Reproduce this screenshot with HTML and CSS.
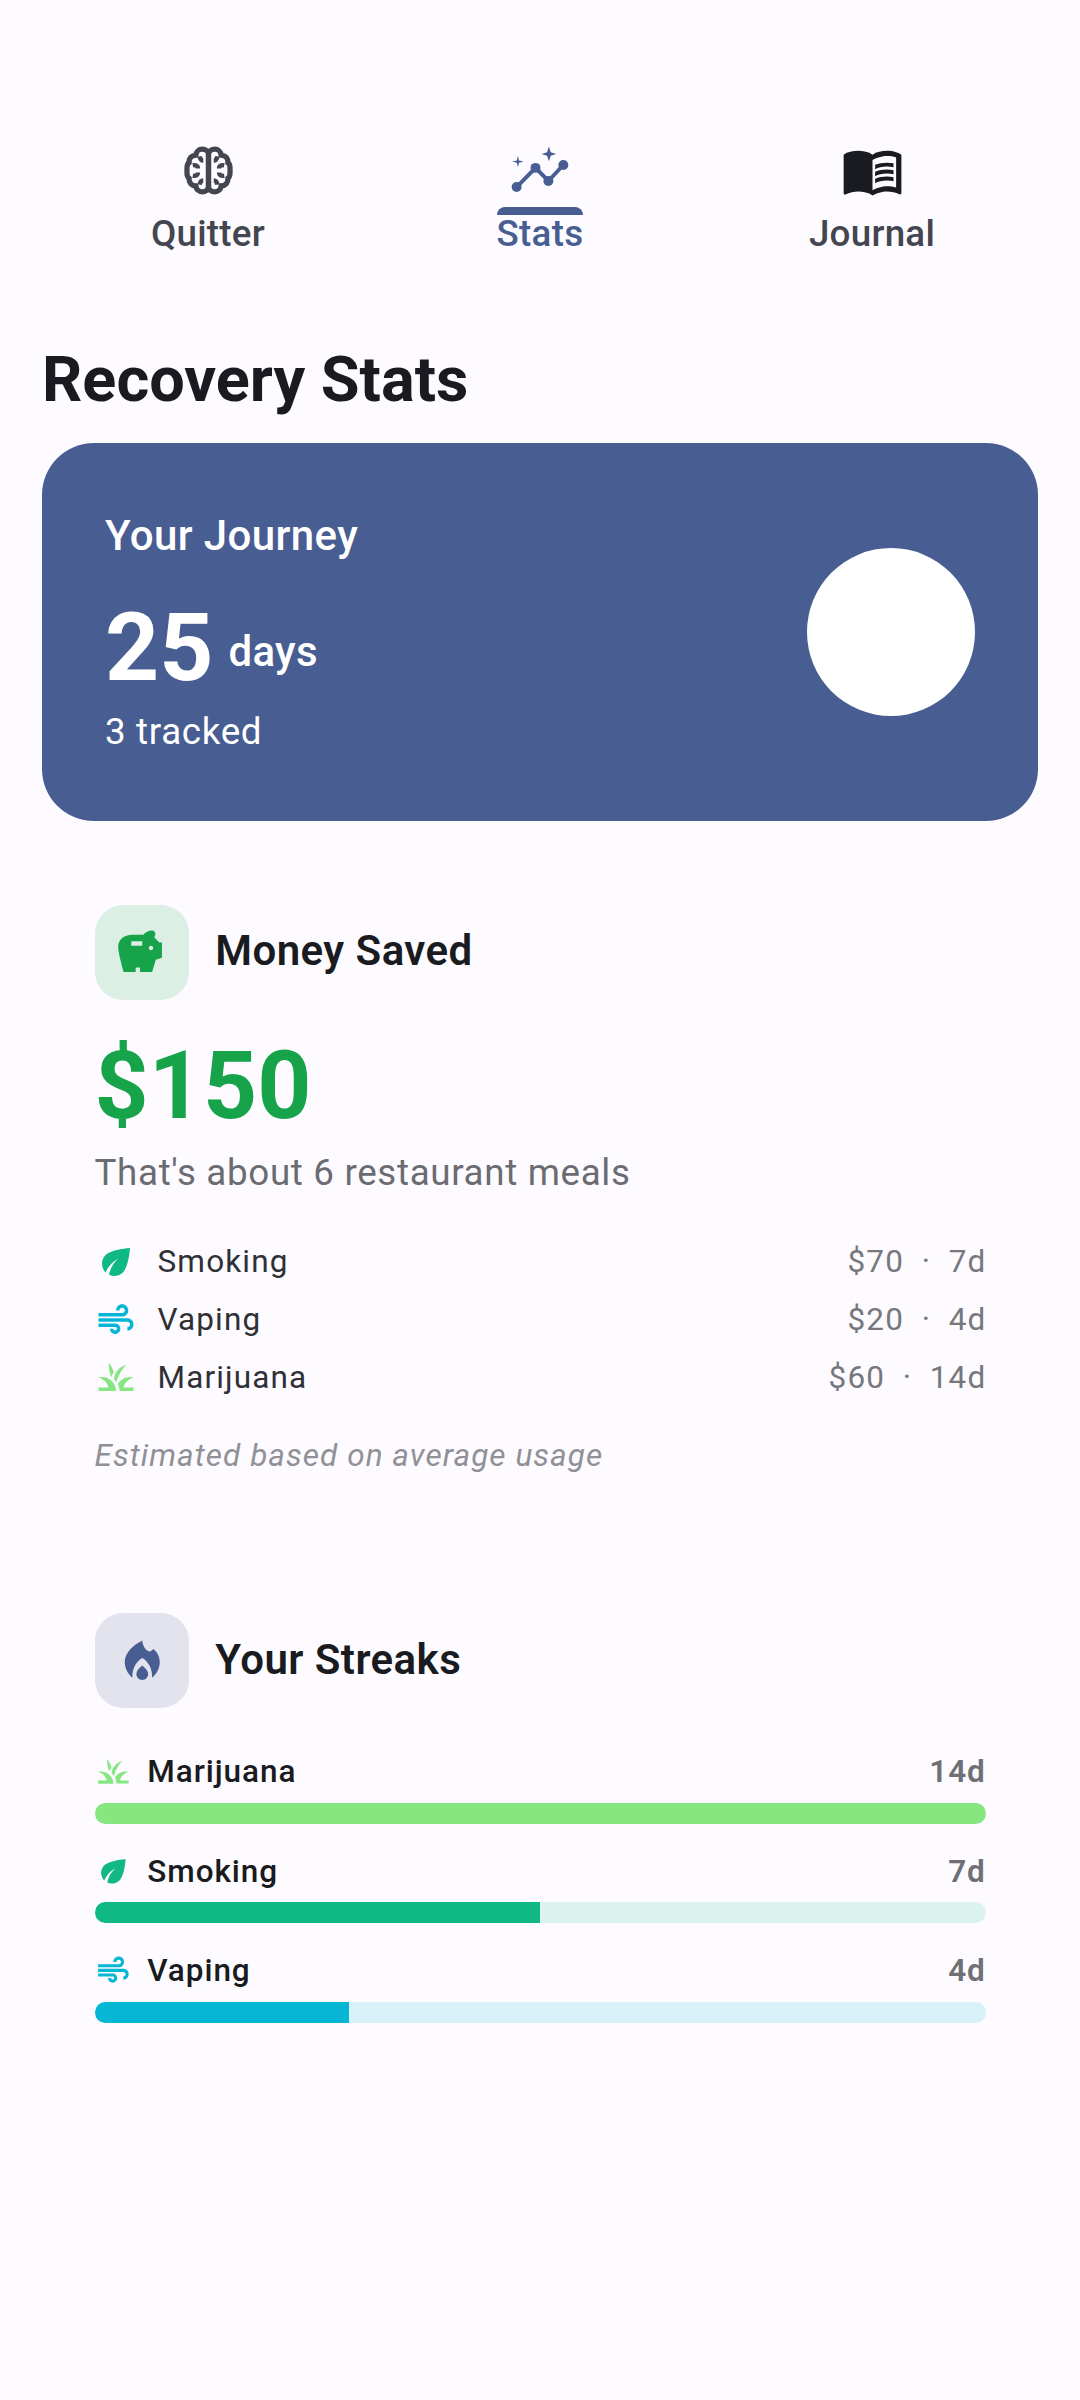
FILE: index.html
```html
<!DOCTYPE html>
<html lang="en">
<head>
    <meta charset="UTF-8">
    <meta name="viewport" content="width=device-width, initial-scale=1.0">
    <title>Recovery Stats</title>
    <link rel="stylesheet" href="styles.css">
</head>
<body>

    <div class="tabs">
        <div class="tab">
            <svg class="tab-icon" viewBox="0 0 24 24" fill="none" stroke="#44464f" stroke-width="2">
                <path d="M12 6C12 4.6 10.8 3.9 9.6 3.9 8.3 3.9 7.3 4.8 7.2 6.1 5.5 6.2 4.5 7.4 4.6 9 3.6 9.6 3.8 10.6 3.8 12S3.6 14.4 4.6 15C4.5 16.6 5.5 17.8 7.2 17.9 7.3 19.2 8.3 20.1 9.6 20.1 10.8 20.1 12 19.4 12 18V6"/>
                <path d="M12 6C12 4.6 13.2 3.9 14.4 3.9 15.7 3.9 16.7 4.8 16.8 6.1 18.5 6.2 19.5 7.4 19.4 9 20.4 9.6 20.2 10.6 20.2 12S20.4 14.4 19.4 15C19.5 16.6 18.5 17.8 16.8 17.9 16.7 19.2 15.7 20.1 14.4 20.1 13.2 20.1 12 19.4 12 18V6"/>
                <path d="M6 10C7.4 9.8 8 10.4 8 11.2M6 14C7.4 14.2 8 13.6 8 12.8M18 10C16.6 9.8 16 10.4 16 11.2M18 14C16.6 14.2 16 13.6 16 12.8M8.6 6.6C8.8 7.8 9.4 8.2 10 8.2M8.6 17.4C8.8 16.2 9.4 15.8 10 15.8M15.4 6.6C15.2 7.8 14.6 8.2 14 8.2M15.4 17.4C15.2 16.2 14.6 15.8 14 15.8" stroke-width="1.7"/>
            </svg>
            <span class="tab-label">Quitter</span>
        </div>
        <div class="tab active">
            <svg class="tab-icon" viewBox="0 0 24 24" fill="#485d92">
                <path d="M2.9 18.3 10.1 11 15 16 20.7 9.9" fill="none" stroke="#485d92" stroke-width="1.5"/>
                <circle cx="2.9" cy="18.3" r="1.9"/>
                <circle cx="10.1" cy="11" r="1.9"/>
                <circle cx="15" cy="16" r="1.9"/>
                <circle cx="20.7" cy="9.9" r="1.9"/>
                <path d="M15.2 2.9 15.9 5 18 5.7 15.9 6.4 15.2 8.5 14.5 6.4 12.4 5.7 14.5 5z"/>
                <path d="M3.4 6.4 3.8 8.2 5.6 8.6 3.8 9 3.4 10.8 3 9 1.2 8.6 3 8.2z"/>
            </svg>
            <span class="tab-indicator"></span>
            <span class="tab-label">Stats</span>
        </div>
        <div class="tab">
            <svg class="tab-icon" viewBox="0 0 24 24" fill="#1a1b20">
                <path d="M21 5c-1.11-.35-2.33-.5-3.5-.5-1.95 0-4.05.4-5.5 1.5-1.45-1.1-3.55-1.5-5.5-1.5S2.45 4.9 1 6v14.65c0 .25.25.5.5.5.1 0 .15-.05.25-.05C3.1 20.45 5.05 20 6.5 20c1.95 0 4.05.4 5.5 1.5 1.35-.85 3.8-1.5 5.5-1.5 1.65 0 3.35.3 4.75 1.05.1.05.15.05.25.05.25 0 .5-.25.5-.5V6c-.6-.45-1.25-.75-2-1zm0 13.5c-1.1-.35-2.3-.5-3.5-.5-1.7 0-4.15.65-5.5 1.5V8c1.35-.85 3.8-1.5 5.5-1.5 1.2 0 2.4.15 3.5.5v11.5z"/>
                <path d="M17.5 10.5c.88 0 1.73.09 2.5.26V9.24c-.79-.15-1.64-.24-2.5-.24-1.7 0-3.24.29-4.5.83v1.66c1.13-.64 2.7-.99 4.5-.99zM13 12.49v1.66c1.13-.64 2.7-.99 4.5-.99.88 0 1.73.09 2.5.26V11.9c-.79-.15-1.64-.24-2.5-.24-1.7 0-3.24.3-4.5.83zM17.5 14.33c-1.7 0-3.24.29-4.5.83v1.66c1.13-.64 2.7-.99 4.5-.99.88 0 1.73.09 2.5.26v-1.52c-.79-.16-1.64-.24-2.5-.24z"/>
            </svg>
            <span class="tab-label">Journal</span>
        </div>
    </div>

    <h1 class="page-title">Recovery Stats</h1>

    <div class="journey-card">
        <div>
            <div class="journey-title">Your Journey</div>
            <div class="journey-count"><span class="journey-number">25</span><span class="journey-unit">days</span></div>
            <div class="journey-tracked">3 tracked</div>
        </div>
        <div class="journey-circle"></div>
    </div>

    <div class="section money-section">
        <div class="section-head">
            <div class="section-icon money-icon">
                <svg viewBox="0 0 24 24" fill="#16a34a"><path d="M19.83 7.5l-2.27-2.27c.07-.42.18-.81.32-1.15.08-.18.12-.37.12-.58 0-.83-.67-1.5-1.5-1.5-1.64 0-3.09.79-4 2h-5C3.46 4 1 6.46 1 9.5S3.5 21 3.5 21H9v-2h2v2h5.5l1.68-5.59 2.82-.94V7.5h-1.17zM12 9H7V7h5v2zm4 2c-.55 0-1-.45-1-1s.45-1 1-1 1 .45 1 1-.45 1-1 1z"/></svg>
            </div>
            <h2 class="section-title">Money Saved</h2>
        </div>
        <div class="money-amount">$150</div>
        <div class="money-note">That's about 6 restaurant meals</div>

        <div class="money-rows">
            <div class="money-row">
                <svg class="row-icon" viewBox="0 0 24 24" fill="#10b981"><path d="M6.05 8.05c-2.73 2.73-2.73 7.15-.02 9.88 1.47-3.4 4.09-6.24 7.36-7.93-2.77 2.34-4.71 5.61-5.39 9.32 2.6 1.23 5.8.78 7.95-1.37C19.43 14.47 20 4 20 4S9.53 4.57 6.05 8.05z"/></svg>
                <span class="row-name">Smoking</span>
                <span class="row-value">$70<i class="row-dot">·</i>7d</span>
            </div>
            <div class="money-row">
                <svg class="row-icon" viewBox="0 0 24 24" fill="#06b6d4"><path d="M14.5 17c0 1.65-1.35 3-3 3s-3-1.35-3-3h2c0 .55.45 1 1 1s1-.45 1-1-.45-1-1-1H2v-2h9.5c1.65 0 3 1.35 3 3zM19 6.5C19 4.57 17.43 3 15.5 3S12 4.57 12 6.5h2c0-.83.67-1.5 1.5-1.5s1.5.67 1.5 1.5S16.33 8 15.5 8H2v2h13.5c1.93 0 3.5-1.57 3.5-3.5zm-.5 4.5H2v2h16.5c.83 0 1.5.67 1.5 1.5s-.67 1.5-1.5 1.5v2c1.93 0 3.5-1.57 3.5-3.5S20.43 11 18.5 11z"/></svg>
                <span class="row-name">Vaping</span>
                <span class="row-value">$20<i class="row-dot">·</i>4d</span>
            </div>
            <div class="money-row">
                <svg class="row-icon" viewBox="0 0 24 24" fill="#86e781"><path d="M12 20H2v-2h5.75C7.02 15.19 4.81 12.99 2 12.26 2.64 12.1 3.31 12 4 12c4.42 0 8 3.58 8 8zM22 12.26c-.64-.16-1.31-.26-2-.26-2.94 0-5.51 1.59-6.9 3.95.43.96.74 2 .83 3.08.03.32.07.64.07.97h8v-2h-5.75c.73-2.81 2.94-5.01 5.75-5.74zM8 4c1.3 1.6 2.3 3.5 2.7 5.6-.6.8-1.1 1.6-1.5 2.5C8.3 9.5 7.7 6.5 8 4zM18 5c-3.8 1-6.6 4-7.2 8 .5.6 1 1.3 1.4 2C13.7 10.4 15.7 7 18 5z"/></svg>
                <span class="row-name">Marijuana</span>
                <span class="row-value">$60<i class="row-dot">·</i>14d</span>
            </div>
        </div>
        <div class="money-foot">Estimated based on average usage</div>
    </div>

    <div class="section streak-section">
        <div class="section-head">
            <div class="section-icon streak-icon">
                <svg viewBox="0 0 24 24" fill="#485d92"><path d="M12 3C12.2 5 13 7 15 8 15.9 7.9 16.6 7.4 17 6.8 18.9 8.2 20 10.4 20 12.8 20 15.6 18.6 18.2 16.5 20 16.7 16 15 12.8 12 11 9 12.8 7.3 16 7.5 20 5.4 18.2 4 15.6 4 12.8 4 8.6 7.8 5.2 12 3z"/><path d="M12 14.4C13.4 15.5 14.7 16.8 14.7 18.3 14.7 19.8 13.5 21 12 21S9.3 19.8 9.3 18.3C9.3 16.8 10.6 15.5 12 14.4z"/></svg>
            </div>
            <h2 class="section-title">Your Streaks</h2>
        </div>

        <div class="streak">
            <div class="streak-head">
                <svg class="streak-glyph" viewBox="0 0 24 24" fill="#86e781"><path d="M12 20H2v-2h5.75C7.02 15.19 4.81 12.99 2 12.26 2.64 12.1 3.31 12 4 12c4.42 0 8 3.58 8 8zM22 12.26c-.64-.16-1.31-.26-2-.26-2.94 0-5.51 1.59-6.9 3.95.43.96.74 2 .83 3.08.03.32.07.64.07.97h8v-2h-5.75c.73-2.81 2.94-5.01 5.75-5.74zM8 4c1.3 1.6 2.3 3.5 2.7 5.6-.6.8-1.1 1.6-1.5 2.5C8.3 9.5 7.7 6.5 8 4zM18 5c-3.8 1-6.6 4-7.2 8 .5.6 1 1.3 1.4 2C13.7 10.4 15.7 7 18 5z"/></svg>
                <span class="streak-name">Marijuana</span>
                <span class="streak-days">14d</span>
            </div>
            <div class="track track-grass"><div class="fill" style="width: 100%"></div></div>
        </div>
        <div class="streak">
            <div class="streak-head">
                <svg class="streak-glyph" viewBox="0 0 24 24" fill="#10b981"><path d="M6.05 8.05c-2.73 2.73-2.73 7.15-.02 9.88 1.47-3.4 4.09-6.24 7.36-7.93-2.77 2.34-4.71 5.61-5.39 9.32 2.6 1.23 5.8.78 7.95-1.37C19.43 14.47 20 4 20 4S9.53 4.57 6.05 8.05z"/></svg>
                <span class="streak-name">Smoking</span>
                <span class="streak-days">7d</span>
            </div>
            <div class="track track-leaf"><div class="fill" style="width: 50%"></div></div>
        </div>
        <div class="streak">
            <div class="streak-head">
                <svg class="streak-glyph" viewBox="0 0 24 24" fill="#06b6d4"><path d="M14.5 17c0 1.65-1.35 3-3 3s-3-1.35-3-3h2c0 .55.45 1 1 1s1-.45 1-1-.45-1-1-1H2v-2h9.5c1.65 0 3 1.35 3 3zM19 6.5C19 4.57 17.43 3 15.5 3S12 4.57 12 6.5h2c0-.83.67-1.5 1.5-1.5s1.5.67 1.5 1.5S16.33 8 15.5 8H2v2h13.5c1.93 0 3.5-1.57 3.5-3.5zm-.5 4.5H2v2h16.5c.83 0 1.5.67 1.5 1.5s-.67 1.5-1.5 1.5v2c1.93 0 3.5-1.57 3.5-3.5S20.43 11 18.5 11z"/></svg>
                <span class="streak-name">Vaping</span>
                <span class="streak-days">4d</span>
            </div>
            <div class="track track-wind"><div class="fill" style="width: 28.57%"></div></div>
        </div>
    </div>

</body>
</html>
```

FILE: styles.css
```css
body {
    font-family: Roboto, sans-serif;
    margin: 0;
    padding: 139px 42px 0;
    min-height: 2400px;
    box-sizing: border-box;
    background: #fdfbff;
    color: #1a1b20;
}

.tabs {
    display: grid;
    grid-template-columns: repeat(3, 1fr);
}

.tab {
    position: relative;
    display: flex;
    flex-direction: column;
    align-items: center;
    color: #44464f;
}

.tab.active {
    color: #485d92;
}

.tab-icon {
    width: 63px;
    height: 63px;
}

.tab-indicator {
    position: absolute;
    top: 68px;
    width: 86px;
    height: 8px;
    background: #485d92;
    border-radius: 8px 8px 0 0;
}

.tab-label {
    margin-top: 11px;
    font-size: 36.75px;
    line-height: 42px;
    font-weight: 500;
    letter-spacing: 0.26px;
}

.page-title {
    margin: 83px 0 0;
    font-size: 63px;
    line-height: 84px;
    font-weight: 700;
    letter-spacing: 0;
}

.journey-card {
    display: flex;
    justify-content: space-between;
    align-items: center;
    height: 378px;
    margin-top: 21px;
    padding: 0 63px;
    box-sizing: border-box;
    background: #485d92;
    border-radius: 52px;
    color: white;
}

.journey-title {
    font-size: 42px;
    line-height: 56px;
    font-weight: 500;
    letter-spacing: 0.4px;
}

.journey-count {
    display: flex;
    align-items: center;
    gap: 15px;
    margin-top: 29px;
}

.journey-number {
    font-size: 94.5px;
    line-height: 110px;
    font-weight: 700;
}

.journey-unit {
    padding-top: 8px;
    font-size: 42px;
    line-height: 56px;
    font-weight: 500;
    letter-spacing: 0.3px;
}

.journey-tracked {
    margin-top: 5px;
    font-size: 36.75px;
    line-height: 48px;
    letter-spacing: 0.66px;
}

.journey-circle {
    width: 168px;
    height: 168px;
    border-radius: 50%;
    background: white;
}

.section {
    padding: 0 52.5px;
}

.money-section {
    margin-top: 84px;
}

.streak-section {
    margin-top: 137px;
}

.section-head {
    display: flex;
    align-items: center;
    gap: 26.25px;
}

.section-icon {
    display: flex;
    align-items: center;
    justify-content: center;
    width: 94.5px;
    height: 94.5px;
    border-radius: 28px;
}

.section-icon svg {
    width: 52.5px;
    height: 52.5px;
}

.money-icon {
    background: #dcefe5;
}

.streak-icon {
    background: #e3e3ee;
}

.section-title {
    margin: 0 0 2px;
    font-size: 42px;
    line-height: 56px;
    font-weight: 600;
    letter-spacing: 0.45px;
}

.money-amount {
    margin-top: 24.5px;
    font-size: 94.5px;
    line-height: 124px;
    font-weight: 700;
    color: #16a34a;
}

.money-note {
    font-size: 36.75px;
    line-height: 50px;
    letter-spacing: 0.66px;
    color: #6b6c72;
}

.money-rows {
    margin-top: 35px;
}

.money-row {
    display: flex;
    align-items: center;
    height: 57.75px;
    font-size: 31.5px;
    letter-spacing: 1.15px;
}

.row-icon {
    width: 42px;
    height: 42px;
    margin-right: 21px;
}

.row-name {
    flex: 1;
    color: #2f3036;
}

.row-value {
    margin-right: -1px;
    letter-spacing: 1.2px;
    color: #77787e;
}

.row-dot {
    margin: 0 17.5px;
    font-style: normal;
}

.money-foot {
    margin-top: 30px;
    font-size: 31.5px;
    line-height: 40px;
    font-style: italic;
    letter-spacing: 1.05px;
    color: #909197;
}

.streak-section .section-head {
    margin-bottom: 43px;
}

.streak {
    margin-bottom: 26.5px;
}

.streak-head {
    display: flex;
    align-items: center;
    height: 42px;
    margin-bottom: 10px;
}

.streak-glyph {
    width: 36.75px;
    height: 36.75px;
    margin-right: 16px;
}

.streak-name {
    flex: 1;
    font-size: 31.5px;
    font-weight: 500;
    letter-spacing: 0.95px;
}

.streak-days {
    font-size: 31.5px;
    font-weight: 600;
    letter-spacing: 0.8px;
    color: #6f7076;
}

.track {
    height: 21px;
    border-radius: 10.5px;
    overflow: hidden;
}

.fill {
    height: 100%;
}

.track-grass {
    background: #e6fae5;
}

.track-grass .fill {
    background: #86e781;
}

.track-leaf {
    background: #dbf3ec;
}

.track-leaf .fill {
    background: #10b981;
}

.track-wind {
    background: #d7f2f8;
}

.track-wind .fill {
    background: #06b6d4;
}
```
